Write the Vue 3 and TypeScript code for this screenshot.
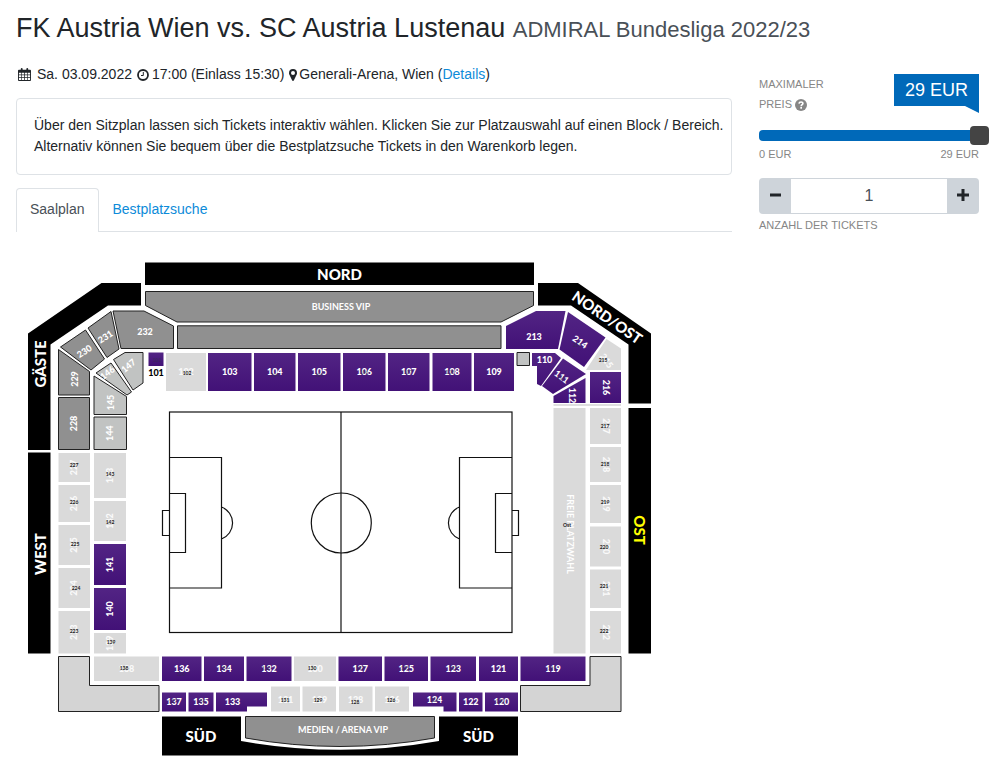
<script setup lang="ts">
import { ref } from 'vue'

type Kind = 'free' | 'sold' | 'closed' | 'guest' | 'blank'

interface Sector {
  name: string
  kind: Kind
  points: string
  x: number
  y: number
  turn: number
  /* position of the small block code */
  code?: [number, number]
}

const maxPrice = ref(29)
const tickets = ref(1)

const rect = (x1: number, y1: number, x2: number, y2: number): string =>
  `${x1},${y1} ${x2},${y1} ${x2},${y2} ${x1},${y2}`

const box = (
  name: string, kind: Kind,
  x1: number, y1: number, x2: number, y2: number,
  turn = 0, code?: [number, number],
): Sector => ({
  name, kind, turn, code,
  points: rect(x1, y1, x2, y2),
  x: (x1 + x2) / 2,
  y: (y1 + y2) / 2,
})

const poly = (
  name: string, kind: Kind, points: string,
  x: number, y: number, turn = 0, code?: [number, number],
): Sector => ({ name, kind, points, x, y, turn, code })

const sectors: Sector[] = [
  poly('232', 'closed', '113,311 144,311 173.5,326 173.5,348.5 121,348.5', 145, 332),
  poly('231', 'closed', '88,328 111,311.5 119,349 107,357.5', 105.5, 337, -33),
  poly('230', 'closed', '60.5,347 85.5,330 104.5,359 91,370', 84.5, 351.5, -33),
  poly('229', 'closed', '58.5,349.5 89.5,371.5 89.5,395 58.5,395', 74.5, 379, -90),
  box('228', 'closed', 58.5, 397.5, 89.5, 449.5, -90),
  poly('147', 'guest', '113.5,359.5 125,352.5 143,352.5 143,383 133,390', 128.5, 366, -40),
  poly('146', 'guest', '96,373 111,363 131.5,392 127,395', 107.5, 373, -38),
  poly('145', 'guest', '94,376 126.5,396.5 126.5,414.5 94,414.5', 110.5, 402.5, -90),
  box('144', 'guest', 94, 417, 126.5, 449.5, -90),

  poly('101', 'free', rect(148.5, 352.5, 163.5, 366), 156, 372.5, 0, [157, 361]),
  box('102', 'sold', 166, 353, 206, 391, 0, [187, 374]),
  box('103', 'free', 208, 353, 251.5, 391),
  box('104', 'free', 254, 353, 295.5, 391, 0, [275, 376]),
  box('105', 'free', 298, 353, 340.5, 391, 0, [319, 376]),
  box('106', 'free', 343, 353, 385.5, 391, 0, [364, 373]),
  box('107', 'free', 388, 353, 429.5, 391, 0, [408, 373]),
  box('108', 'free', 432.5, 353, 471.5, 391, 0, [450, 373]),
  box('109', 'free', 474, 353, 514, 391),
  poly('', 'guest', rect(517, 352.5, 529.5, 365.5), 0, 0),

  poly('213', 'free', '506,326 536,311 565.5,311 558,349 506,349', 534, 337),
  poly('214', 'free', '568,312 605.5,337.5 584,367 559.5,349.5', 580, 342, 35, [577, 346]),
  poly('215', 'sold', '606.5,339 621,348.5 621,370 586,370', 606.5, 361, 55, [603, 361]),
  poly('110', 'free', '532,353 555,353 561,358 541,386 537,384 537,366 532,366', 544.5, 360),
  poly('111', 'free', '563,358.5 586,374 553,394 542,386', 561.5, 377, 36, [561, 379]),
  poly('112', 'free', '585.5,378 585.5,403 553.5,403 553.5,396', 571.5, 395.5, 90),
  box('216', 'free', 590, 372, 621, 403, 90),

  box('217', 'sold', 590, 408, 621, 444, 90, [605, 427]),
  box('218', 'sold', 590, 447, 621, 482, 90, [605, 464.5]),
  box('219', 'sold', 590, 485, 621, 523, 90, [605, 503]),
  box('220', 'sold', 590, 526.5, 621, 566.5, 90, [604, 548]),
  box('221', 'sold', 590, 569.5, 621, 608, 90, [604, 587]),
  box('222', 'sold', 590, 611, 621, 653.5, 90, [604, 632]),

  box('227', 'sold', 58.5, 453, 90, 482, -90, [74, 466]),
  box('226', 'sold', 58.5, 485, 90, 522, -90, [74, 503]),
  box('225', 'sold', 58.5, 525, 90, 565, -90, [75, 545]),
  box('224', 'sold', 58.5, 568, 90, 608, -90, [76, 589]),
  box('223', 'sold', 58.5, 611, 90, 653.5, -90, [74, 632]),

  box('143', 'sold', 94, 453, 126, 498, -90, [110, 475]),
  box('142', 'sold', 94, 501, 126, 541, -90, [110, 523]),
  box('141', 'free', 94, 544, 126, 585, -90),
  box('140', 'free', 94, 588, 126, 630, -90),
  box('139', 'sold', 94, 633, 126, 653.5, -90, [111, 643]),

  box('138', 'sold', 94, 656.5, 159, 681, 0, [124, 669]),
  box('136', 'free', 162, 656.5, 201.5, 681, 0, [181, 675]),
  box('134', 'free', 204, 656.5, 244, 681, 0, [224, 669]),
  box('132', 'free', 246.5, 656.5, 291.5, 681, 0, [266, 669]),
  box('130', 'sold', 294, 656.5, 336, 681, 0, [312, 669]),
  box('127', 'free', 338.5, 656.5, 382, 681, 0, [360, 669]),
  box('125', 'free', 384.5, 656.5, 428, 681, 0, [405, 669]),
  box('123', 'free', 430.5, 656.5, 476, 681, 0, [453, 669]),
  box('121', 'free', 479, 656.5, 518, 681),
  box('119', 'free', 520.5, 656.5, 585.5, 681, 0, [552, 669]),

  box('137', 'free', 162, 692.5, 186, 711.5, 0, [173, 702]),
  box('135', 'free', 188.5, 692.5, 213.5, 711.5, 0, [201, 702]),
  poly('133', 'free', '216,692.5 267,692.5 267,706.5 247,706.5 247,711.5 216,711.5', 232.5, 702),
  poly('131', 'sold', rect(271, 686.5, 300, 711.5), 285.5, 700, 0, [285, 701]),
  poly('129', 'sold', rect(302.5, 686.5, 336, 711.5), 319.5, 700, 0, [318, 701]),
  poly('128', 'sold', rect(339, 686.5, 372.5, 711.5), 355.5, 700, 0, [355, 703]),
  poly('126', 'sold', rect(375, 686.5, 409, 711.5), 392, 700, 0, [391, 701]),
  poly('124', 'free', '413,692.5 456.5,692.5 456.5,711.5 443.5,711.5 443.5,706.5 413,706.5', 434.5, 700, 0, [434, 701]),
  box('122', 'free', 459, 692.5, 482.5, 711.5),
  box('120', 'free', 485, 692.5, 518, 711.5, 0, [500, 702]),

  poly('', 'blank', '58.5,656.5 89.5,656.5 89.5,685.5 159,685.5 159,711.5 58.5,711.5', 0, 0),
  poly('', 'blank', '520.5,685.5 590,685.5 590,656.5 621,656.5 621,711.5 520.5,711.5', 0, 0),
]
</script>

<template>
  <main class="page">
    <h1 class="title">
      FK Austria Wien vs. SC Austria Lustenau <small>ADMIRAL Bundesliga 2022/23</small>
    </h1>

    <div class="columns">
      <section class="main">
        <p class="meta">
          <svg class="icon-cal" viewBox="0 0 14 14" aria-hidden="true">
            <path fill="currentColor" fill-rule="evenodd" d="M1 2h2V1a1 1 0 0 1 2 0v1h4V1a1 1 0 0 1 2 0v1h2a1 1 0 0 1 1 1v10a1 1 0 0 1-1 1H1a1 1 0 0 1-1-1V3a1 1 0 0 1 1-1zM1 5v2h2.300V5zM4 5v2h2.600V5zM7.400 5v2H10V5zM10.700 5v2H13V5zM1 7.800v2.200h2.300V7.800zM4 7.800v2.200h2.600V7.800zM7.400 7.800v2.200H10V7.800zM10.700 7.800v2.200H13V7.800zM1 10.800V13h2.300v-2.200zM4 10.800V13h2.600v-2.200zM7.400 10.800V13H10v-2.200zM10.700 10.800V13H13v-2.200z" />
          </svg>
          <span class="date">Sa. 03.09.2022</span>
          <svg class="icon-clock" viewBox="0 0 12 12" aria-hidden="true">
            <circle cx="6" cy="6" r="5" fill="none" stroke="currentColor" stroke-width="1.800" />
            <path d="M6.300 3v3.500H4" fill="none" stroke="currentColor" stroke-width="1" />
          </svg>
          <span class="time">17:00 (Einlass 15:30)</span>
          <svg class="icon-pin" viewBox="0 0 8 12" aria-hidden="true">
            <path fill="currentColor" fill-rule="evenodd" d="M4 0a4 4 0 0 1 4 4c0 .7-.1 1.200-.3 1.600L4.800 11.500a.9.9 0 0 1-1.600 0L.3 5.600C.1 5.200 0 4.700 0 4a4 4 0 0 1 4-4zM4 2a2 2 0 1 0 0 4 2 2 0 0 0 0-4z" />
          </svg>
          <span>Generali-Arena, Wien (<a href="#details">Details</a>)</span>
        </p>

        <p class="notice">
          Über den Sitzplan lassen sich Tickets interaktiv wählen. Klicken Sie zur Platzauswahl auf einen Block / Bereich.<br>
          Alternativ können Sie bequem über die Bestplatzsuche Tickets in den Warenkorb legen.
        </p>

        <nav class="tabs">
          <a class="tab active" href="#saalplan">Saalplan</a>
          <a class="tab" href="#bestplatz">Bestplatzsuche</a>
        </nav>

        <svg class="plan" viewBox="16 248 716 520" role="img" aria-label="Saalplan">
          <defs>
            <linearGradient id="violet" x1="0" y1="0" x2="0" y2="1">
              <stop offset="0" stop-color="#522484" />
              <stop offset="1" stop-color="#421177" />
            </linearGradient>
          </defs>

          <g class="stand">
            <polygon :points="rect(145, 262.5, 534, 285)" />
            <polygon points="141,283 101.500,283 28,333.500 28,450 50.500,450 50.500,344.500 108,305.500 141,305.500" />
            <polygon points="538,283 578,283 651,333.500 651,403.500 628.500,403.500 628.500,344.500 571,305.500 538,305.500" />
            <polygon :points="rect(28, 452.5, 50.5, 653.5)" />
            <polygon :points="rect(628.5, 408, 651, 653.5)" />
            <polygon :points="rect(162, 716.5, 518, 755.5)" />
          </g>
          <path d="M241 716V741Q340 758.500 439 741V716z" fill="#fff" />

          <g class="closed">
            <polygon points="145.500,291.500 533.500,291.500 533.500,305.500 501,322 177,322 145.500,305.500" />
            <polygon :points="rect(177.5, 325.8, 501, 348.5)" />
            <path d="M245.500 716.500H434.500V738Q340 755 245.500 738z" />
          </g>

          <polygon :points="rect(553.5, 408, 585.5, 653.5)" fill="#dadada" />
          <path d="M553.500 405H621" stroke="#d4d4d4" stroke-width="1.500" />

          <g class="pitch">
            <rect x="169.500" y="412" width="342.500" height="220.500" />
            <path d="M341 412V632.500" />
            <circle cx="341.300" cy="523" r="30" />
            <path d="M169.500 457.500H221.500V588H169.500M169.500 493.500H185.500V552.500H169.500M169.500 510.500H162.500V535.500H169.500M221.500 507A17.100 17.100 0 0 1 221.500 539" />
            <path d="M512 457.500H459.500V588H512M512 493.500H495.500V552.500H512M512 510.500H518.500V535.500H512M459.500 507A17.100 17.100 0 0 0 459.500 539" />
          </g>

          <component
            :is="s.kind === 'free' ? 'a' : 'g'"
            v-for="(s, i) in sectors"
            :key="i"
            :href="s.kind === 'free' ? '#block-' + s.name : undefined"
            :class="s.kind"
          >
            <polygon :points="s.points" />
            <text
              v-if="s.name"
              :class="['num', { dark: s.name === '101' }]"
              :transform="`translate(${s.x} ${s.y}) rotate(${s.turn})`"
              y="3"
            >{{ s.name }}</text>
            <text v-if="s.code" class="code" :x="s.code[0]" :y="s.code[1] + 1">{{ s.name }}</text>
          </component>

          <g class="name">
            <text x="339.500" y="279.500">NORD</text>
            <text transform="translate(39.500 364) rotate(-90)" y="6">GÄSTE</text>
            <text transform="translate(39.500 554) rotate(-90)" y="6">WEST</text>
            <text class="ost" transform="translate(639.500 530) rotate(90)" y="6">OST</text>
            <text transform="translate(607.500 317) rotate(34.500)" y="6">NORD/OST</text>
            <text x="201" y="742">SÜD</text>
            <text x="478.500" y="742">SÜD</text>
          </g>
          <g class="area">
            <text x="341" y="309.500">BUSINESS VIP</text>
            <text x="343" y="733">MEDIEN / ARENA VIP</text>
            <text transform="translate(570 534) rotate(90)" y="3">FREIE PLATZWAHL</text>
          </g>
          <text class="code" x="567" y="527">Ost</text>
        </svg>
      </section>

      <aside class="side">
        <div class="price-head">
          <label class="caption" for="price">
            Maximaler Preis
            <svg class="icon-help" viewBox="0 0 12 12" aria-hidden="true">
              <circle cx="6" cy="6" r="6" fill="#868686" />
              <path d="M4 4.600C4.200 2.400 8 2.500 7.900 4.500 7.800 5.700 6.200 5.700 6.200 7.200" fill="none" stroke="#fff" stroke-width="1.600" />
              <rect x="5.300" y="8" width="1.700" height="1.700" fill="#fff" />
            </svg>
          </label>
          <output class="bubble" for="price">{{ maxPrice }} EUR</output>
        </div>
        <input id="price" v-model.number="maxPrice" class="slider" type="range" min="0" max="29">
        <div class="caption scale"><span>0 EUR</span><span>29 EUR</span></div>

        <div class="stepper">
          <button type="button" aria-label="Weniger" @click="tickets = Math.max(1, tickets - 1)">
            <svg viewBox="0 0 12 12"><path d="M1 6H12" /></svg>
          </button>
          <input id="count" v-model.number="tickets" type="text" inputmode="numeric">
          <button type="button" aria-label="Mehr" @click="tickets++">
            <svg viewBox="0 0 12 12"><path d="M0 6H12M6 0V12" /></svg>
          </button>
        </div>
        <label class="caption" for="count">Anzahl der Tickets</label>
      </aside>
    </div>
  </main>
</template>

<style>
body {
  background: #fff;
}
</style>

<style scoped>
.page {
  box-sizing: border-box;
  padding: 11px 15px 0 16px;
  color: #212529;
  font: 14px/21px "Liberation Sans", Arial, sans-serif;
}
a {
  color: #0d8bd9;
  text-decoration: none;
}
.title {
  margin: 0 0 29px;
  font-size: 27px;
  font-weight: 400;
  line-height: 34px;
}
.title small {
  color: #495057;
  font-size: 22px;
}
.columns {
  display: grid;
  grid-template-columns: minmax(0, 1fr) 220px;
  gap: 27px;
}
.meta {
  display: flex;
  align-items: center;
  margin: -10px 0 13px;
}
.icon-cal {
  width: 13px;
  height: 13px;
  margin: 0 6px 0 2px;
}
.icon-clock {
  width: 12px;
  height: 12px;
  margin: 0 3px 0 5px;
}
.icon-pin {
  width: 8px;
  height: 12px;
  margin: 0 2px 0 5px;
}
.notice {
  margin: 0 0 13px;
  padding: 16px 7px 17px 17px;
  border: 1px solid #dee2e6;
  border-radius: 4px;
}
.tabs {
  display: flex;
  border-bottom: 1px solid #dee2e6;
}
.tab {
  padding: 10px 13px 11px;
  border: 1px solid transparent;
  border-bottom: 0;
  border-radius: 4px 4px 0 0;
}
.tab.active {
  margin-bottom: -1px;
  padding-bottom: 12px;
  border-color: #dee2e6;
  background: #fff;
  color: #495057;
}
.plan {
  display: block;
  width: 100%;
  margin-top: 16px;
  font-family: Lato, sans-serif;
}
.plan text {
  text-anchor: middle;
}
.plan .stand {
  fill: #000;
}
.plan .closed {
  fill: #909090;
  stroke: #222;
}
.plan .guest {
  fill: #c1c3c2;
  stroke: #222;
}
.plan .blank {
  fill: #d4d4d4;
  stroke: #222;
}
.plan .sold {
  fill: #dadada;
}
.plan .free {
  fill: url(#violet);
}
.plan .pitch {
  fill: none;
  stroke: #111;
  stroke-width: 1.2px;
}
.plan .num {
  fill: #fff;
  stroke: none;
  font-size: 9px;
  font-weight: 900;
}
.plan .sold .num {
  fill: #fafafa;
}
.plan .num.dark {
  fill: #000;
}
.plan .code {
  fill: #222;
  stroke: none;
  font-size: 5px;
  font-weight: 700;
}
.plan .free .code {
  fill: #33304a;
  fill-opacity: 0.6;
}
.plan .name {
  fill: #fff;
  font-size: 15px;
  font-weight: 900;
}
.plan .name .ost {
  fill: #ff0;
}
.plan .area {
  fill: #fff;
  font-size: 9px;
  font-weight: 700;
}
.price-head {
  display: flex;
  justify-content: space-between;
  align-items: flex-start;
}
.price-head .caption {
  width: 90px;
}
.caption {
  color: #868686;
  font-size: 11px;
  line-height: 20px;
  text-transform: uppercase;
}
.side {
  margin-top: -2px;
}
.main {
  margin-top: -2px;
}
.icon-help {
  width: 12px;
  height: 12px;
  vertical-align: -3px;
}
.bubble {
  position: relative;
  width: 85px;
  background: #0069b9;
  color: #fff;
  font-size: 18px;
  line-height: 32px;
  text-align: center;
}
.bubble::after {
  content: "";
  position: absolute;
  top: 100%;
  right: 0;
  width: 14px;
  height: 7px;
  background: #0069b9;
  clip-path: polygon(0 0, 100% 0, 100% 100%);
}
.slider {
  display: block;
  width: 230px;
  height: 19px;
  margin: 12px 0 -1px;
  appearance: none;
  background: transparent;
}
.slider::-webkit-slider-runnable-track {
  height: 11px;
  border-radius: 4px;
  background: #0069b9;
}
.slider::-webkit-slider-thumb {
  width: 19px;
  height: 19px;
  margin-top: -4px;
  appearance: none;
  border-radius: 4px;
  background: #444;
}
.scale {
  display: flex;
  justify-content: space-between;
}
.stepper {
  display: flex;
  height: 36px;
  margin-top: 14px;
}
.stepper button {
  display: grid;
  place-items: center;
  width: 32px;
  padding: 0 0 3px;
  border: 0;
  border-radius: 4px 0 0 4px;
  background: #ced4da;
}
.stepper button:last-child {
  border-radius: 0 4px 4px 0;
}
.stepper button svg {
  width: 12px;
  height: 12px;
}
.stepper button path {
  stroke: #212529;
  stroke-width: 3px;
}
.stepper input {
  flex: 1;
  min-width: 0;
  box-sizing: border-box;
  padding: 0;
  border: 1px solid #ced4da;
  border-width: 1px 0;
  color: #495057;
  font: 16px "Liberation Sans", Arial, sans-serif;
  text-align: center;
}
</style>
